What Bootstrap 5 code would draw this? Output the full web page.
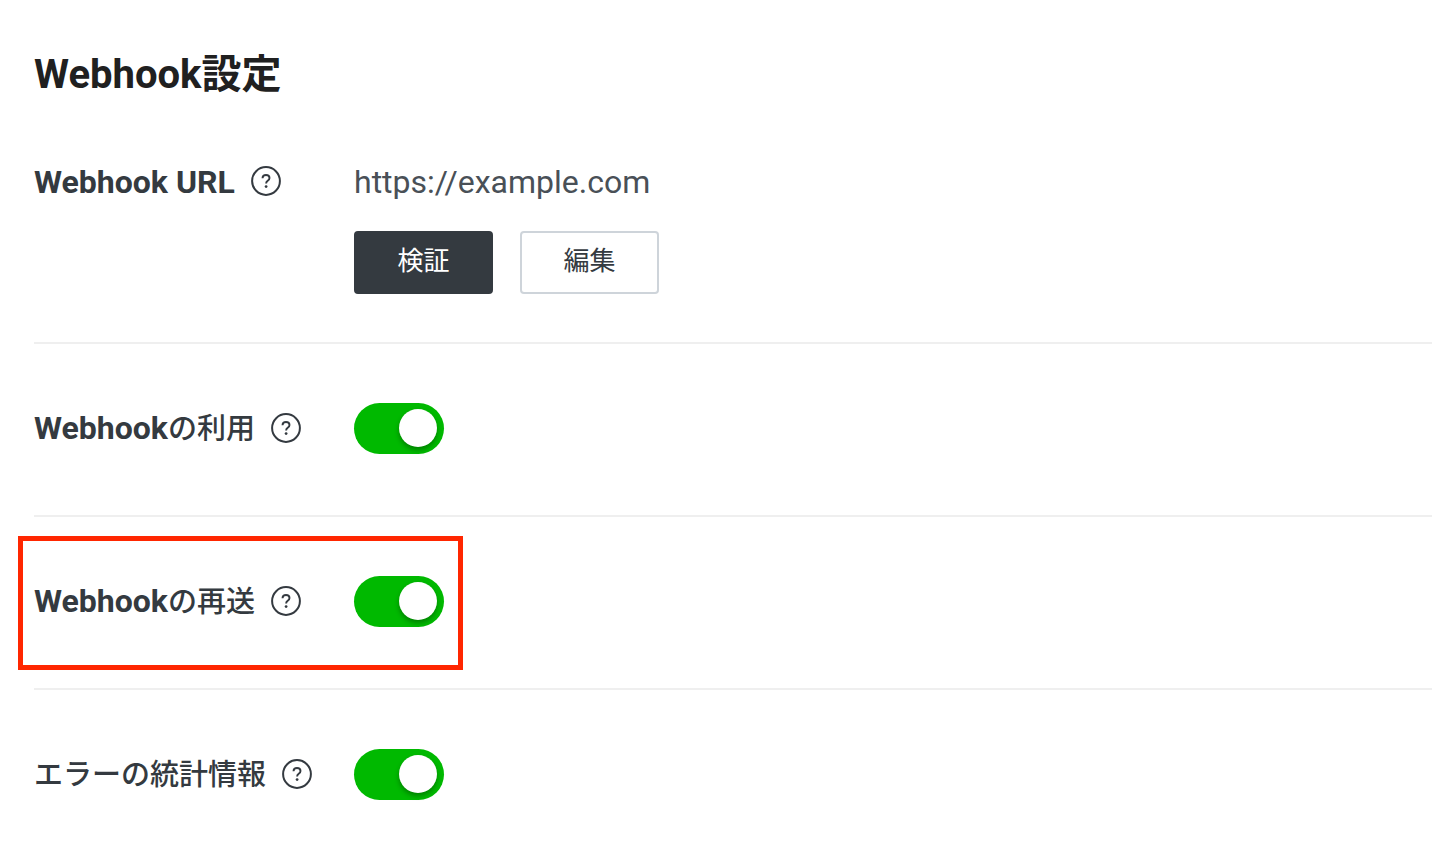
<!DOCTYPE html>
<html lang="ja">
<head>
<meta charset="utf-8">
<meta name="viewport" content="width=device-width, initial-scale=1">
<title>Webhook設定</title>
<link href="https://cdn.jsdelivr.net/npm/bootstrap@5.3.0/dist/css/bootstrap.min.css" rel="stylesheet">
<style>
body{font-family:Roboto,"Noto Sans CJK JP",sans-serif;background:#fff;color:#343a40}
.page{padding:47px 0 0 34px}
.page-title{font-size:40px;line-height:56px;font-weight:700;color:#202020;margin:0 0 24px}
.setting{border-bottom:2px solid #efefef;padding:35px 0 48px}
.setting.toggle-row{padding:59px 0 61px}
.setting:last-child{border-bottom:0}
.label-col{width:320px;font-size:32px;line-height:40px;font-weight:700}
.label-col .jp{font-size:29px;font-weight:500}
.help{padding:0 0 2px;border:0;background:none;line-height:0;color:#343a40}
.url{font-size:32px;line-height:40px;color:#495057}
.buttons{gap:27px;margin-top:29px}
.action{width:139px;height:63px;border-radius:4px;font-size:26px;line-height:36px;padding:0 0 4px;border-width:2px}
.action-dark{background:#343a40;border-color:#343a40;color:#fff}
.action-light{background:#fff;border-color:#ced4da;color:#343a40}
.switch{appearance:none;display:block;width:90px;height:51px;margin:0;border-radius:26px;background:#00b900;padding:6px 7px;cursor:pointer}
.switch::before{content:"";display:block;width:38px;height:38px;border-radius:50%;background:#fff;box-shadow:0 3px 5px rgba(0,0,0,.3)}
.switch:checked::before{margin-left:auto}
.switch:not(:checked){background:#c8c8c8}
.callout{position:absolute;left:-16px;top:19px;width:445px;height:134px;border:5px solid #ff2600;pointer-events:none}
</style>
</head>
<body>
<svg class="d-none" aria-hidden="true"><symbol id="help" viewBox="0 0 30 30"><circle cx="15" cy="15" r="13.9" fill="none" stroke="currentColor" stroke-width="2"/><path d="M11.5 12.2c.1-2.1 1.5-3.2 3.5-3.2s3.5 1.1 3.5 2.9c0 1.3-.7 2-1.8 2.8-1.2.9-1.6 1.4-1.6 2.7" fill="none" stroke="currentColor" stroke-width="1.9"/><circle cx="15.1" cy="20.6" r="1.4" fill="currentColor"/></symbol></svg>
<main class="page">
<h1 class="page-title">Webhook設定</h1>
<section class="setting d-flex">
<div class="label-col d-flex align-items-center align-self-start flex-shrink-0"><span>Webhook URL</span><button class="help ms-3" type="button" aria-label="Webhook URL"><svg width="30" height="30"><use href="#help"/></svg></button></div>
<div><div class="url">https://example.com</div>
<div class="d-flex buttons"><button type="button" class="btn action action-dark">検証</button><button type="button" class="btn action action-light">編集</button></div></div>
</section>
<section class="setting toggle-row d-flex align-items-center">
<div class="label-col d-flex align-items-center flex-shrink-0"><label for="use">Webhook<span class="jp">の利用</span></label><button class="help ms-3" type="button" aria-label="Webhookの利用"><svg width="30" height="30"><use href="#help"/></svg></button></div>
<input class="switch" type="checkbox" role="switch" id="use" checked>
</section>
<section class="setting toggle-row d-flex align-items-center position-relative">
<div class="label-col d-flex align-items-center flex-shrink-0"><label for="resend">Webhook<span class="jp">の再送</span></label><button class="help ms-3" type="button" aria-label="Webhookの再送"><svg width="30" height="30"><use href="#help"/></svg></button></div>
<input class="switch" type="checkbox" role="switch" id="resend" checked>
<div class="callout"></div>
</section>
<section class="setting toggle-row d-flex align-items-center">
<div class="label-col d-flex align-items-center flex-shrink-0"><label for="stats"><span class="jp">エラーの統計情報</span></label><button class="help ms-3" type="button" aria-label="エラーの統計情報"><svg width="30" height="30"><use href="#help"/></svg></button></div>
<input class="switch" type="checkbox" role="switch" id="stats" checked>
</section>
</main>
<script src="https://cdn.jsdelivr.net/npm/bootstrap@5.3.0/dist/js/bootstrap.bundle.min.js"></script>
</body>
</html>
